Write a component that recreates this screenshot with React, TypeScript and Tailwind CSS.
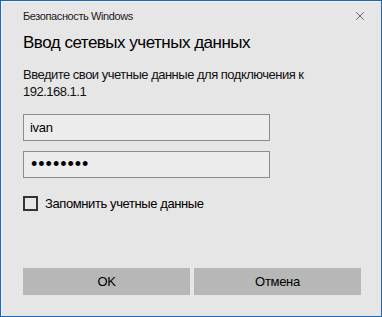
import { X } from 'lucide-react';

export default function App() {
  return (
    <div className="w-[382px] h-[317px] bg-[#1a66b8] p-px font-['Liberation_Sans',sans-serif]">
      <div className="h-full w-full bg-[#e6e6e6] border-l border-t border-[#f4f4f4] flex flex-col pl-[21px] pr-[20px] text-[#000]">
        <div className="flex items-center justify-between h-[28px]">
          <span className="text-[11px] text-[#1a1a1a] tracking-[-0.4px]">Безопасность Windows</span>
          <X className="w-[14px] h-[14px] text-[#333] mr-[-6px]" strokeWidth={1.2} />
        </div>
        <h1 className="text-[17px] leading-[26px] tracking-[-0.5px]">Ввод сетевых учетных данных</h1>
        <p className="text-[13px] leading-[17px] mt-[10px] text-[#111] tracking-[-0.5px]">
          Введите свои учетные данные для подключения к
          <br />
          192.168.1.1
        </p>
        <div className="mt-[14px] w-[247px] h-[27px] border border-[#8c8c8c] bg-[#ececec] flex items-center px-[6px] text-[13px] tracking-[-0.3px]">
          ivan
        </div>
        <div className="mt-[10px] w-[247px] h-[27px] border border-[#8c8c8c] bg-[#ececec] flex items-center px-[7px] text-[18px] tracking-[1px]">
          ••••••••
        </div>
        <label className="mt-[16px] flex items-center gap-[7px] text-[13px] tracking-[-0.4px]">
          <span className="w-[15px] h-[15px] border-2 border-[#333] bg-[#e6e6e6] inline-block" />
          Запомнить учетные данные
        </label>
        <div className="flex-1" />
        <div className="flex gap-[4px] mb-[21px]">
          <button className="w-[167px] h-[27px] bg-[#b7b7b7] text-[13px] tracking-[-0.3px]">OK</button>
          <button className="w-[167px] h-[27px] bg-[#b7b7b7] text-[13px] tracking-[-0.3px]">Отмена</button>
        </div>
      </div>
    </div>
  );
}
